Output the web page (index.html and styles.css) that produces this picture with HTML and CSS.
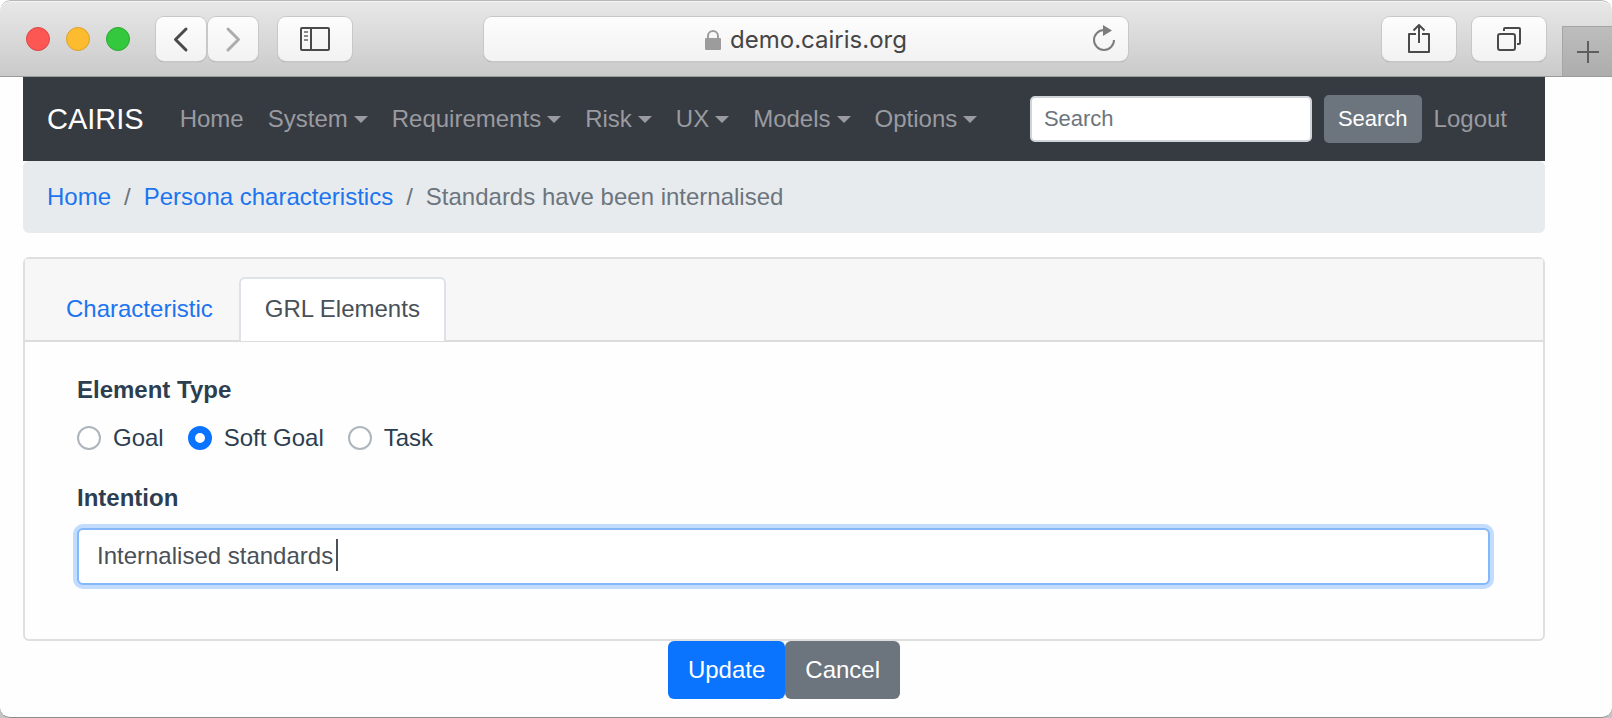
FILE: index.html
```html
<!DOCTYPE html>
<html lang="en">
<head>
<meta charset="utf-8">
<title>CAIRIS</title>
<link rel="stylesheet" href="styles.css">
</head>
<body>
<div class="window">
  <header class="toolbar">
    <div class="toolbar-left">
      <div class="lights">
        <span class="light light-close"></span>
        <span class="light light-min"></span>
        <span class="light light-max"></span>
      </div>
      <div class="history">
        <button class="tool tool-small" type="button" aria-label="Back">
          <svg width="50" height="44" viewBox="0 0 50 44" fill="none" stroke="#4a4a4a" stroke-width="3" stroke-linecap="round" stroke-linejoin="round"><path d="M30 12 19.500 22.500 30 33"/></svg>
        </button>
        <button class="tool tool-small" type="button" aria-label="Forward">
          <svg width="50" height="44" viewBox="0 0 50 44" fill="none" stroke="#acacac" stroke-width="3" stroke-linecap="round" stroke-linejoin="round"><path d="M20 12 30.500 22.500 20 33"/></svg>
        </button>
      </div>
      <button class="tool" type="button" aria-label="Sidebar">
        <svg width="74" height="44" viewBox="0 0 74 44" fill="none" stroke="#4a4a4a" stroke-width="2"><rect x="23" y="11" width="28" height="22" rx="1"/><path d="M33 11v22"/><path d="M26 15h4M26 19h4M26 23h4" stroke="#8a8a8a"/></svg>
      </button>
    </div>
    <div class="address">
      <span class="address-text">
        <svg width="16" height="20" viewBox="0 0 16 20"><path d="M3 9V6a5 5 0 0 1 10 0v3" fill="none" stroke="#9c9c9c" stroke-width="2"/><rect y="8" width="16" height="12" rx="1" fill="#9c9c9c"/></svg>
        demo.cairis.org
      </span>
      <button class="reload" type="button" aria-label="Reload">
        <svg width="24" height="28" viewBox="0 0 24 28"><path d="M12 5A10 10 0 1 0 22 15" fill="none" stroke="#7d7d7d" stroke-width="2"/><path d="M11 0v11l9-5.500z" fill="#7d7d7d"/></svg>
      </button>
    </div>
    <div class="toolbar-right">
      <button class="tool" type="button" aria-label="Share">
        <svg width="74" height="44" viewBox="0 0 74 44" fill="none" stroke="#4a4a4a" stroke-width="2" stroke-linejoin="round"><path d="M34 17h-7v18h20V17h-7M37 26V8M31.500 13.500 37 8l5.500 5.500"/></svg>
      </button>
      <button class="tool" type="button" aria-label="Show tabs">
        <svg width="74" height="44" viewBox="0 0 74 44" fill="none" stroke="#4a4a4a" stroke-width="2"><rect x="26" y="17" width="17" height="16" rx="2"/><path d="M32 14v-2q0-1 1-1h14q1 0 1 1v14q0 1-1 1h-2"/></svg>
      </button>
      <button class="new-tab" type="button" aria-label="New tab">
        <svg width="22" height="22" viewBox="0 0 22 22" stroke="#5e5e5e" stroke-width="2"><path d="M11 0v22M0 11h22"/></svg>
      </button>
    </div>
  </header>

  <div class="page">
    <nav class="navbar">
      <a class="brand" href="#">CAIRIS</a>
      <div class="menu">
        <a class="nav-link" href="#">Home</a>
        <a class="nav-link dropdown" href="#">System</a>
        <a class="nav-link dropdown" href="#">Requirements</a>
        <a class="nav-link dropdown" href="#">Risk</a>
        <a class="nav-link dropdown" href="#">UX</a>
        <a class="nav-link dropdown" href="#">Models</a>
        <a class="nav-link dropdown" href="#">Options</a>
      </div>
      <form class="search">
        <input class="search-input" type="text" placeholder="Search" aria-label="Search">
        <button class="search-button" type="button">Search</button>
        <a class="nav-link" href="#">Logout</a>
      </form>
    </nav>

    <ol class="breadcrumb">
      <li class="crumb"><a href="#">Home</a></li>
      <li class="crumb"><a href="#">Persona characteristics</a></li>
      <li class="crumb">Standards have been internalised</li>
    </ol>

    <main class="card">
      <div class="card-header">
        <a class="tab" href="#">Characteristic</a>
        <a class="tab tab-active" href="#">GRL Elements</a>
      </div>
      <form class="card-body" id="grl">
        <fieldset class="group">
          <legend class="label">Element Type</legend>
          <div class="radios">
            <label class="option"><input class="radio" type="radio" name="type">Goal</label>
            <label class="option"><input class="radio" type="radio" name="type" checked>Soft Goal</label>
            <label class="option"><input class="radio" type="radio" name="type">Task</label>
          </div>
        </fieldset>
        <div class="group">
          <label class="label" for="intention">Intention</label>
          <div class="field">
            <input class="text-input" id="intention" type="text" value="Internalised standards">
            <span class="cursor"></span>
          </div>
        </div>
      </form>
    </main>

    <div class="actions">
      <button class="button button-primary" type="submit" form="grl">Update</button>
      <button class="button button-secondary" type="button">Cancel</button>
    </div>
  </div>
</div>
</body>
</html>
```
FILE: styles.css
```css
* { box-sizing: border-box; }

body {
  margin: 0;
  background: linear-gradient(#fff 50%, #c4c4c4 50%);
  color: #2c3e50;
  font-family: "Liberation Sans", Arial, sans-serif;
  font-size: 24px;
  line-height: 36px;
}

a { color: #1c75ee; text-decoration: none; }

button, input { font-family: inherit; }

svg { display: block; flex: none; }

.window {
  min-height: 100vh;
  background: #fefefe;
  border-bottom: 1px solid #8c8c8c;
  border-radius: 10px;
  overflow: hidden;
}

/* Browser toolbar */
.toolbar {
  display: grid;
  grid-template-columns: 1fr 40% 1fr;
  align-items: center;
  height: 77px;
  border-top: 1px solid #b8b8b8;
  border-bottom: 1px solid #9b9b9b;
  border-radius: 10px 10px 0 0;
  background: linear-gradient(#e8e8e8, #cacaca);
  box-shadow: inset 0 1px #f5f5f5;
}

.toolbar-left { display: flex; align-items: center; gap: 20px; padding-left: 26px; }
.lights { display: flex; gap: 16px; margin-right: 6px; }
.light { width: 24px; height: 24px; border: 1px solid; border-radius: 50%; }
.light-close { background: #fc5753; border-color: #dc4644; }
.light-min { background: #fdbc30; border-color: #dca02c; }
.light-max { background: #34c83e; border-color: #2ca832; }
.history { display: flex; gap: 2px; }

.tool {
  width: 74px;
  height: 44px;
  padding: 0;
  border: 0;
  border-radius: 8px;
  background: linear-gradient(#fdfdfd, #f2f2f2);
  box-shadow: 0 0 0 1px #c8c8c8, 0 1px 1px #8e8e8e;
}
.tool-small { width: 50px; }

.address {
  display: flex;
  align-items: center;
  height: 44px;
  padding: 0 12px;
  border-radius: 8px;
  background: linear-gradient(#fdfdfd, #f2f2f2);
  box-shadow: 0 0 0 1px #c8c8c8, 0 1px 1px #8e8e8e;
}
.address-text {
  display: flex;
  flex: 1;
  align-items: center;
  justify-content: center;
  gap: 9px;
  padding: 3px 0 0 24px;
  color: #454545;
  font-family: Inter, sans-serif;
  font-size: 24px;
}
.reload { padding: 0; border: 0; background: none; }

.toolbar-right { display: flex; align-items: center; justify-content: flex-end; gap: 16px; height: 100%; }
.new-tab {
  display: flex;
  align-self: flex-end;
  align-items: center;
  justify-content: center;
  width: 50px;
  height: 50px;
  padding: 0;
  border: 1px solid #a5a5a5;
  border-width: 1px 0 0 1px;
  background: linear-gradient(#bdbdbd, #adadad);
}

/* Application */
.page { margin: 0 67px 18px 23px; }

.navbar {
  display: flex;
  align-items: center;
  height: 84px;
  padding: 0 26px 0 24px;
  background: #363a41;
}
.brand { margin-right: 24px; color: #fff; font-size: 29px; }
.menu { display: flex; }
.nav-link { display: flex; align-items: center; gap: 6px; padding: 0 12px; color: #999ba0; }
.dropdown::after {
  content: "";
  border: 7px solid transparent;
  border-top-color: currentColor;
  border-bottom: 0;
}
.search { display: flex; align-items: center; margin-left: auto; }
.search-input {
  width: 282px;
  height: 46px;
  margin-right: 12px;
  padding: 0 12px;
  border: 2px solid #ced4da;
  border-radius: 5px;
  background: #fff;
  font-size: 22px;
}
.search-input::placeholder { color: #6c757d; }
.search-button {
  height: 48px;
  padding: 0 14px;
  border: 0;
  border-radius: 5px;
  background: #6c757d;
  color: #fff;
  font-size: 22px;
}

.breadcrumb {
  display: flex;
  margin: 0 0 24px;
  padding: 18px 24px;
  border-radius: 6px;
  background: #e8ebee;
  color: #6c757d;
  list-style: none;
}
.crumb + .crumb::before { content: "/"; padding: 0 13px; }

.card { border: 2px solid #dfdfdf; border-radius: 6px; }
.card-header {
  display: flex;
  padding: 18px 15px 0;
  border-bottom: 2px solid #dcdcdc;
  background: #f7f7f7;
}
.tab {
  margin-bottom: -1px;
  padding: 12px 24px;
  border: 2px solid transparent;
  border-bottom: 0;
  border-radius: 6px 6px 0 0;
}
.tab-active {
  padding-bottom: 14px;
  border-color: #dee2e6;
  background: #fff;
  color: #495057;
}
.card-body { padding: 30px 53px 30px 52px; }
.group { min-width: 0; margin: 0 0 24px; padding: 0; border: 0; }
.label { display: block; margin-bottom: 12px; padding: 0; font-weight: bold; }
.radios { display: flex; gap: 24px; }
.option { display: flex; align-items: center; gap: 12px; }
.radio {
  width: 24px;
  height: 24px;
  margin: 0;
  border: 2px solid #adb5bd;
  border-radius: 50%;
  background: #fff;
  appearance: none;
}
.radio:checked { border: 7px solid #0a74ff; }

.field { position: relative; }
.text-input {
  display: block;
  width: 100%;
  height: 57px;
  padding: 0 18px 2px;
  border: 2px solid #84b8f8;
  border-radius: 6px;
  outline: 0;
  background: #fff;
  box-shadow: 0 0 0 4px #c1dcff;
  color: #495057;
  font-size: 24px;
}
.cursor {
  position: absolute;
  top: 11px;
  left: 259px;
  width: 2px;
  height: 32px;
  background: #495057;
}

.actions { display: flex; justify-content: center; }
.button {
  height: 58px;
  padding: 0 20px;
  border: 0;
  border-radius: 6px;
  color: #fff;
  font-size: 24px;
}
.button-primary { background: #0a74ff; }
.button-secondary { background: #6c757d; }
```
